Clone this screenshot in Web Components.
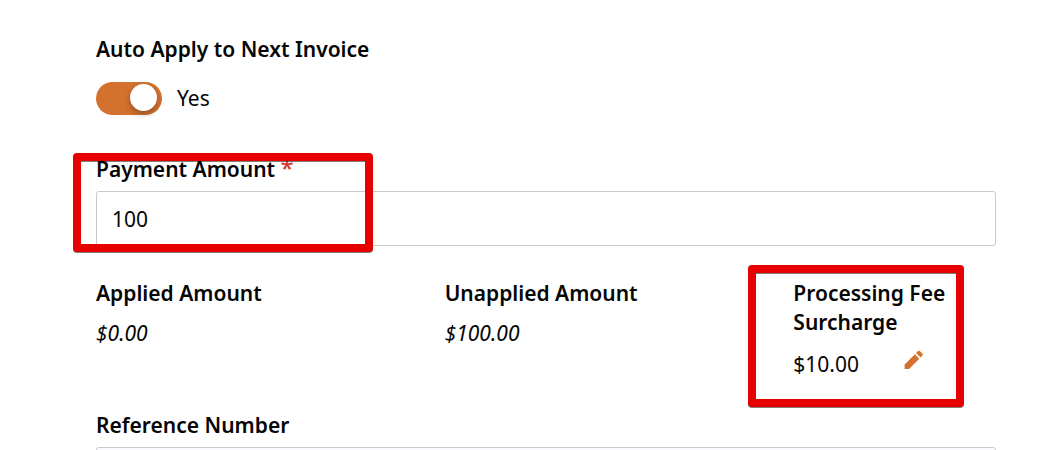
<!DOCTYPE html>
<html lang="en">
<head>
<meta charset="utf-8">
<meta name="viewport" content="width=device-width, initial-scale=1">
<title>Payment</title>
<style>
  body {
    margin: 0;
    background: #fff;
    color: #060606;
    font: 21px/29px "Noto Sans", "Open Sans", sans-serif;
    --accent: #d3722e;
    --line: #c9c7d1;
    --mark: #e60000;
  }
</style>
</head>
<body>
<payment-form></payment-form>

<script>
class ToggleField extends HTMLElement {
  constructor() {
    super();
    this.attachShadow({ mode: "open" });
  }

  connectedCallback() {
    const label = this.getAttribute("label") ?? "";

    this.shadowRoot.innerHTML = `
      <style>
        :host {
          display: flex;
          flex-direction: column;
          gap: 18px;
        }

        label {
          font-weight: 600;
        }

        .row {
          display: flex;
          align-items: center;
          gap: 15px;
        }

        input {
          appearance: none;
          display: flex;
          align-items: flex-start;
          box-sizing: border-box;
          width: 66px;
          height: 33px;
          margin: 0;
          padding: 2px 5px;
          border-radius: 17px;
          background: #a5a5ab;
          cursor: pointer;
        }

        input::before {
          content: "";
          width: 27px;
          height: 27px;
          border-radius: 50%;
          background: #fff;
          box-shadow: 0 3px 6px rgba(0, 0, 0, .3);
        }

        input:checked {
          justify-content: flex-end;
          background: var(--accent);
        }
      </style>

      <label for="toggle">${label}</label>
      <div class="row">
        <input type="checkbox" id="toggle" checked>
        <span class="state">Yes</span>
      </div>
    `;

    const input = this.shadowRoot.querySelector("input");
    const state = this.shadowRoot.querySelector(".state");

    input.addEventListener("change", () => {
      state.textContent = input.checked ? "Yes" : "No";
    });
  }
}

class TextField extends HTMLElement {
  constructor() {
    super();
    this.attachShadow({ mode: "open" });
  }

  connectedCallback() {
    const label = this.getAttribute("label") ?? "";
    const value = this.getAttribute("value") ?? "";
    const star = this.hasAttribute("required") ? `<span class="star">*</span>` : "";

    this.shadowRoot.innerHTML = `
      <style>
        :host {
          display: flex;
          flex-direction: column;
          gap: 7px;
        }

        label {
          font-weight: 600;
        }

        .star {
          color: #d9372c;
          font-size: 24px;
          font-weight: 500;
          line-height: 1;
        }

        input {
          box-sizing: border-box;
          width: 100%;
          height: 55px;
          padding: 0 15px;
          border: 1px solid var(--line);
          border-radius: 3px;
          background: var(--field, #fff);
          color: inherit;
          font: inherit;
        }
      </style>

      <label for="field">${label} ${star}</label>
      <input type="text" id="field" value="${value}">
    `;
  }
}

class AmountInfo extends HTMLElement {
  constructor() {
    super();
    this.attachShadow({ mode: "open" });

    this.shadowRoot.innerHTML = `
      <style>
        :host {
          display: flex;
          flex-direction: column;
          gap: 13px;
        }

        :host([computed]) {
          gap: 11px;
          font-style: italic;
        }

        .label {
          font-style: normal;
          font-weight: 600;
        }

        .value {
          display: flex;
          gap: 43px;
        }
      </style>

      <div class="label"><slot name="label"></slot></div>
      <div class="value"><slot></slot></div>
    `;
  }
}

class EditButton extends HTMLElement {
  constructor() {
    super();
    this.attachShadow({ mode: "open" });

    this.shadowRoot.innerHTML = `
      <style>
        :host {
          display: block;
        }

        button {
          display: block;
          padding: 0;
          border: 0;
          background: none;
          color: var(--accent);
          cursor: pointer;
        }

        svg {
          display: block;
          width: 24px;
          height: 24px;
          fill: currentColor;
        }
      </style>

      <button type="button" aria-label="Edit">
        <svg viewBox="0 0 24 24" aria-hidden="true">
          <path d="M2.6 14.6V19h4.4L17.3 8.700l-4.400-4.400zM20.500 5.500a1.200 1.200 0 0 0 0-1.700L17.800 1.100a1.200 1.200 0 0 0-1.700 0L14.100 3.100l4.400 4.400z"/>
        </svg>
      </button>
    `;
  }
}

// Red frame laid over whatever is slotted in
class MarkFrame extends HTMLElement {
  constructor() {
    super();
    this.attachShadow({ mode: "open" });

    this.shadowRoot.innerHTML = `
      <style>
        :host {
          display: block;
          position: relative;
        }

        .frame {
          position: absolute;
          inset: var(--frame-inset);
          width: var(--frame-width, auto);
          box-sizing: border-box;
          border: 8px solid var(--mark);
          border-radius: 4px;
          filter: drop-shadow(0 1px 0 rgba(0, 0, 0, .5));
          pointer-events: none;
        }
      </style>

      <slot></slot>
      <div class="frame"></div>
    `;
  }
}

class PaymentForm extends HTMLElement {
  constructor() {
    super();
    this.attachShadow({ mode: "open" });

    this.shadowRoot.innerHTML = `
      <style>
        :host {
          display: block;
          padding: 35px 44px 35px 96px;
        }

        form {
          display: flex;
          flex-direction: column;
        }

        .payment {
          margin-top: 40px;
          --frame-inset: -2px auto -6px -23px;
          --frame-width: 300px;
        }

        .amounts {
          display: grid;
          grid-template-columns: repeat(3, 1fr);
          gap: 146px;
          margin: 33px 0 32px;
        }

        .fee {
          --frame-inset: -14px 32px -28px -45px;
        }

        .reference {
          --field: #fafafc;
        }
      </style>

      <form>
        <toggle-field label="Auto Apply to Next Invoice"></toggle-field>

        <mark-frame class="payment">
          <text-field label="Payment Amount" value="100" required></text-field>
        </mark-frame>

        <div class="amounts">
          <amount-info computed><span slot="label">Applied Amount</span>$0.00</amount-info>
          <amount-info computed><span slot="label">Unapplied Amount</span>$100.00</amount-info>
          <mark-frame class="fee">
            <amount-info><span slot="label">Processing Fee Surcharge</span><span>$10.00</span><edit-button></edit-button></amount-info>
          </mark-frame>
        </div>

        <text-field class="reference" label="Reference Number"></text-field>
      </form>
    `;
  }
}

customElements.define("toggle-field", ToggleField);
customElements.define("text-field", TextField);
customElements.define("amount-info", AmountInfo);
customElements.define("edit-button", EditButton);
customElements.define("mark-frame", MarkFrame);
customElements.define("payment-form", PaymentForm);
</script>
</body>
</html>
